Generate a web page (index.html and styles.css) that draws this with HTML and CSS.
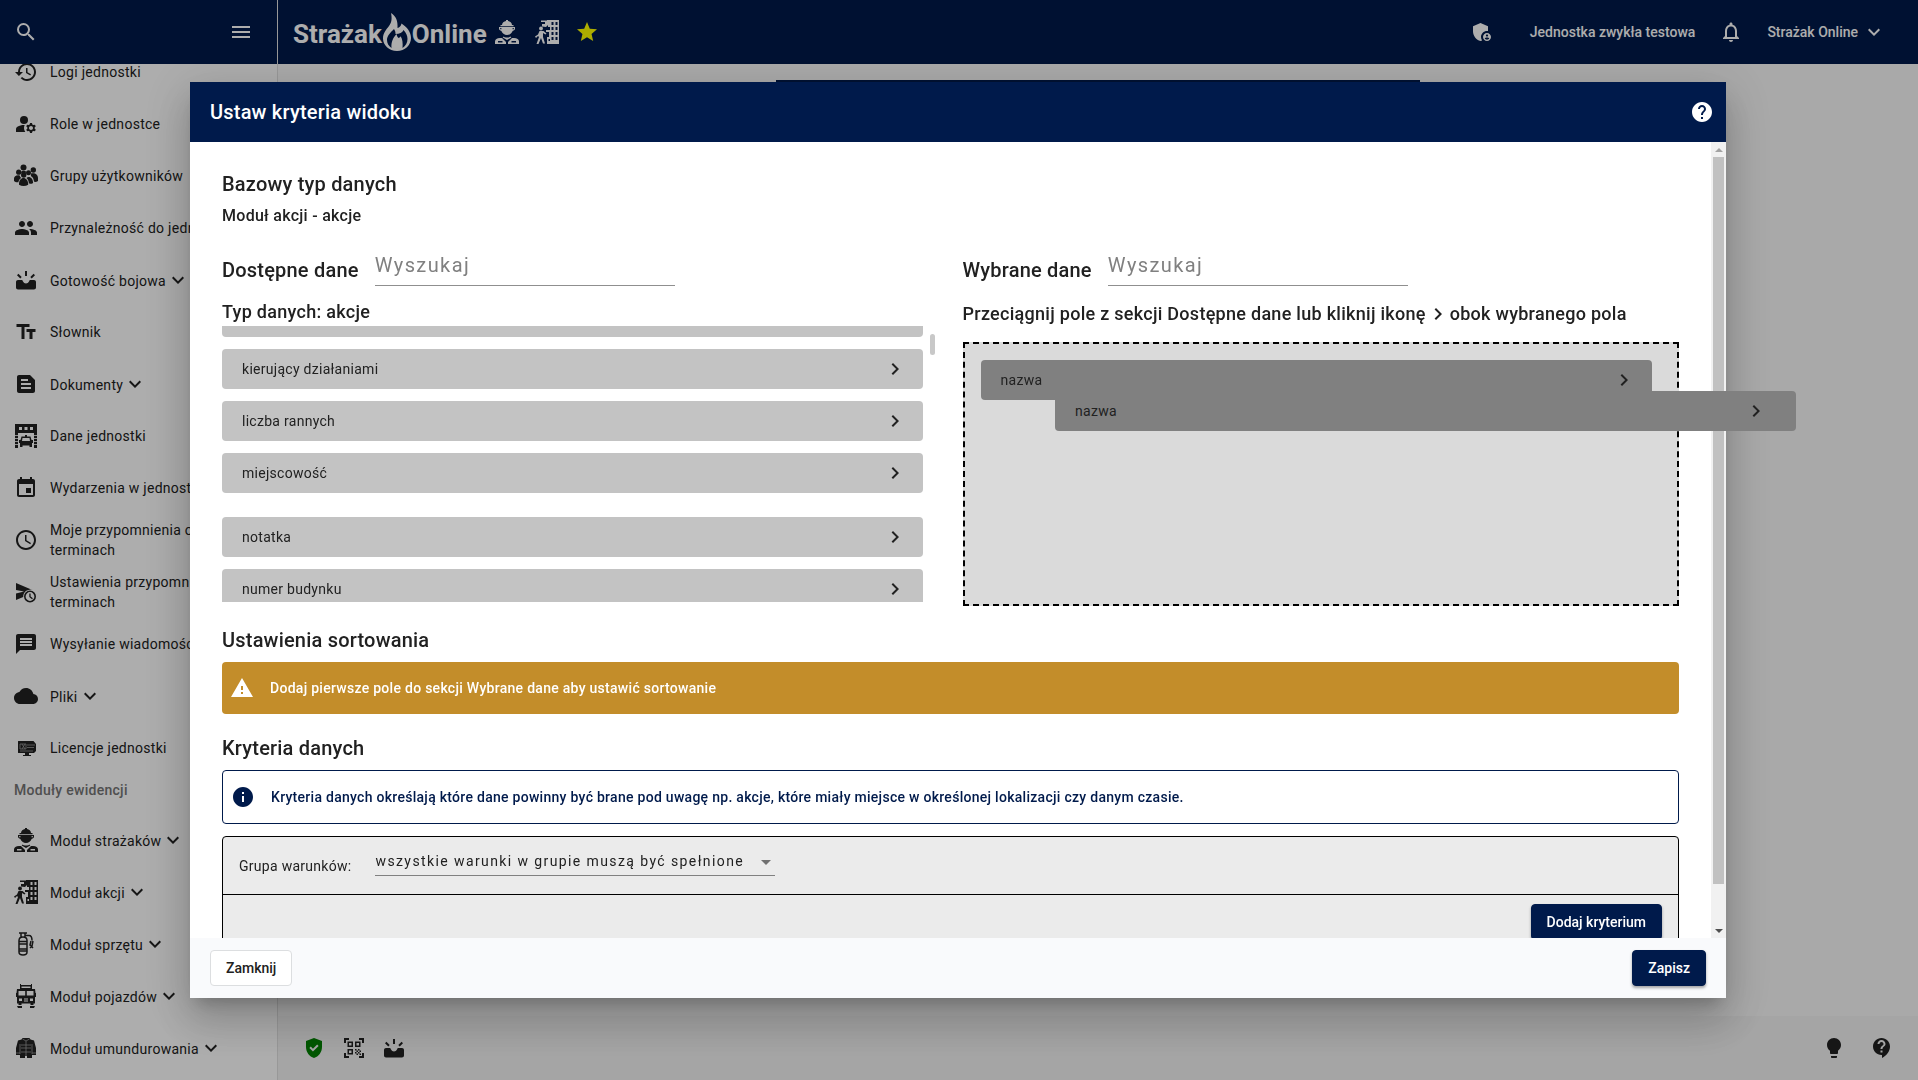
FILE: index.html
```html
<!DOCTYPE html>
<html lang="pl">
<head>
    <meta charset="utf-8">
    <title>Strażak Online</title>
    <link rel="stylesheet" href="styles.css">
</head>
<body>
    <svg class="sprite" aria-hidden="true">
        <symbol id="search" viewBox="0 0 24 24"><path d="M15.5 14h-.79l-.28-.27A6.471 6.471 0 0 0 16 9.5 6.5 6.5 0 1 0 9.5 16c1.61 0 3.09-.59 4.23-1.57l.27.28v.79l5 4.99L20.49 19l-4.99-5zm-6 0C7.01 14 5 11.99 5 9.5S7.01 5 9.5 5 14 7.01 14 9.5 11.99 14 9.5 14z"/></symbol>
        <symbol id="menu" viewBox="0 0 24 24"><path d="M3 18h18v-2H3v2zm0-5h18v-2H3v2zm0-7v2h18V6H3z"/></symbol>
        <symbol id="history" viewBox="0 0 24 24"><path d="M13 3c-4.97 0-9 4.03-9 9H1l3.89 3.89.07.14L9 12H6c0-3.87 3.13-7 7-7s7 3.13 7 7-3.13 7-7 7c-1.93 0-3.68-.79-4.94-2.06l-1.42 1.42C8.27 19.99 10.51 21 13 21c4.97 0 9-4.03 9-9s-4.03-9-9-9zm-1 5v5l4.28 2.54.72-1.21-3.5-2.08V8H12z"/></symbol>
        <symbol id="role" viewBox="0 0 24 24"><circle cx="10" cy="8" r="4"/><path d="M10.67 13.02C10.45 13.01 10.23 13 10 13c-2.42 0-4.68.67-6.61 1.82-.88.52-1.39 1.5-1.39 2.53V20h9.26A6.963 6.963 0 0 1 10 16c0-1.07.25-2.08.67-2.98zM20.75 16c0-.22-.03-.42-.06-.63l1.14-1.01-1-1.73-1.45.49c-.32-.27-.68-.48-1.08-.63L18 11h-2l-.3 1.49c-.4.15-.76.36-1.08.63l-1.45-.49-1 1.73 1.14 1.01c-.03.21-.06.41-.06.63s.03.42.06.63l-1.14 1.01 1 1.73 1.45-.49c.32.27.68.48 1.08.63L16 21h2l.3-1.49c.4-.15.76-.36 1.08-.63l1.45.49 1-1.73-1.14-1.01c.03-.21.06-.41.06-.63zM17 18c-1.1 0-2-.9-2-2s.9-2 2-2 2 .9 2 2-.9 2-2 2z"/></symbol>
        <symbol id="crowd" viewBox="0 0 24 24"><circle cx="9.5" cy="3.6" r="3"/><circle cx="19.3" cy="6" r="2.7"/><circle cx="4.7" cy="8.2" r="2.6"/><circle cx="14.5" cy="8.8" r="2.5"/><circle cx="9.7" cy="11" r="2.7"/><path d="M6.8 8c1.5-1.6 4.2-1.6 5.4-.2-.5.7-.5 1.300-.4 1.800-1.400-.8-3-.6-4.200.1 0-.6-.3-1.200-.8-1.700zM16.800 9.600c3.500-1.300 7.200.4 7.200 4.400v3c-1.300.9-2.500 1-4 .8-.2-2.900-1-4.700-3.200-5.900.4-.7.4-1.500 0-2.300zM0 17v-2.500c0-2.500 2.700-3.900 5.700-3.100.3 1.200.8 2 1.500 2.600-1.500.8-2.600 2.300-2.800 4.300C2.600 18.500 1 18.200 0 17zM12.400 13.900c2.800-2.100 6.600.1 6.700 5-1.200.8-2.800 1-4.200.7-.1-2.600-1-4.600-2.500-5.700zM5 20.700c-.4-9 9.400-8.600 9.200 0-2.700 1.700-6.500 1.700-9.200 0z"/></symbol>
        <symbol id="group" viewBox="0 0 24 24"><path d="M16 11c1.66 0 2.99-1.34 2.99-3S17.66 5 16 5c-1.66 0-3 1.34-3 3s1.34 3 3 3zm-8 0c1.66 0 2.99-1.34 2.99-3S9.66 5 8 5C6.34 5 5 6.34 5 8s1.34 3 3 3zm0 2c-2.33 0-7 1.17-7 3.500V19h14v-2.500c0-2.330-4.670-3.500-7-3.500zm8 0c-.29 0-.62.02-.97.05 1.16.84 1.970 1.970 1.970 3.450V19h6v-2.500c0-2.330-4.670-3.500-7-3.500z"/></symbol>
        <symbol id="ready" viewBox="0 0 24 24"><path d="M4 12h3.500c.8 0 1 .4 1.500 1.500.7 1.300 1.600 2 3 2s2.300-.7 3-2c.5-1.100.7-1.500 1.500-1.500H20c1.100 0 2 .9 2 2v5.500c0 1.100-.9 2-2 2H4c-1.100 0-2-.9-2-2V14c0-1.100.9-2 2-2zM11 3h2v5h-2zM3 7.200l1.400-1.400 3.300 3.300-1.400 1.400zM21 7.200l-1.400-1.400-3.300 3.300 1.400 1.400z"/></symbol>
        <symbol id="letters" viewBox="0 0 24 24"><path d="M2.500 4v3h5v12h3V7h5V4h-13zm19 5h-9v3h3v7h3v-7h3V9z"/></symbol>
        <symbol id="doc" viewBox="0 0 24 24"><path d="M16 3H5c-1.100 0-2 .9-2 2v14c0 1.100.9 2 2 2h14c1.100 0 2-.9 2-2V8l-5-5zM7 7h7v2H7V7zm10 10H7v-2h10v2zm0-4H7v-2h10v2z"/></symbol>
        <symbol id="station" viewBox="0 0 24 24"><path fill-rule="evenodd" d="M1 0h22v24h-3V9H4v15H1zM5 3v3h3V3zm5.500 0v3h3V3zM16 3v3h3V3z"/><path d="M1 11.500h3M1 14.500h3M1 17.500h3M1 20.500h3M20 11.500h3M20 14.500h3M20 17.500h3M20 20.500h3" stroke="#fff" stroke-width=".8"/><path fill-rule="evenodd" d="M11 11h2v1.500h3.500l1 3.500H19v3h-1v4h-2.500v-1.500h-7V23H6v-4H5v-3h1.500l1-3.500H11zM8.500 14L8 17h8l-.5-3z"/></symbol>
        <symbol id="event" viewBox="0 0 24 24"><path d="M17 12h-5v5h5v-5zM16 1v2H8V1H6v2H5c-1.110 0-1.990.9-1.990 2L3 19c0 1.100.89 2 2 2h14c1.100 0 2-.9 2-2V5c0-1.100-.9-2-2-2h-1V1h-2zm3 18H5V8h14v11z"/></symbol>
        <symbol id="clock" viewBox="0 0 24 24"><path d="M11.990 2C6.470 2 2 6.480 2 12s4.470 10 9.990 10C17.520 22 22 17.520 22 12S17.520 2 11.990 2zM12 20c-4.420 0-8-3.580-8-8s3.580-8 8-8 8 3.580 8 8-3.580 8-8 8zm.5-13H11v6l5.250 3.150.75-1.230-4.500-2.670z"/></symbol>
        <symbol id="send-later" viewBox="0 0 24 24"><path d="M2 3l17 7.200A7 7 0 0 0 9.200 17L2 20v-6.500l8-2-8-1.500z"/><circle cx="16" cy="16.500" r="5.200" fill="none" stroke="currentColor" stroke-width="1.600"/><path d="M15.300 13.500h1.300v2.900l2.300 1.900-.9.900-2.700-2.300z"/></symbol>
        <symbol id="message" viewBox="0 0 24 24"><path d="M20 2H4c-1.100 0-1.990.9-1.990 2L2 22l4-4h14c1.100 0 2-.9 2-2V4c0-1.100-.9-2-2-2zM6 9h12v2H6V9zm12 5H6v-2h12v2zm0-6H6V6h12v2z"/></symbol>
        <symbol id="cloud" viewBox="0 0 24 24"><path d="M19.350 10.040C18.670 6.590 15.640 4 12 4 9.110 4 6.600 5.640 5.350 8.040 2.340 8.360 0 10.910 0 14c0 3.310 2.690 6 6 6h13c2.760 0 5-2.240 5-5 0-2.640-2.050-4.780-4.650-4.960z"/></symbol>
        <symbol id="license" viewBox="0 0 24 24"><path d="M4.500 5h15l2.500 3v7l-2 2h-5v2h2v1H9v-1h2v-2H4.500C4 17 4 16.500 4 16V6c0-.5 0-1 .5-1z"/><path d="M6 8h6v5H6zM13 9h8M13 11.500h7M6 15h13M8 8l3 5M11 8l-3 5" fill="none" stroke="#999" stroke-width=".8"/></symbol>
        <symbol id="fireman" viewBox="0 0 24 24"><path fill-rule="evenodd" d="M7 5C7 2.800 9 1.200 11 1V0h2v1c2 .200 4 1.800 4 4h1.500v1.200h-13V5zM4 7h16v1.500c0 1.300-.9 2.200-2.400 2.400C17 13 14.500 15 12 15s-5-2-5.600-4.100C4.900 10.700 4 9.800 4 8.500zM8.500 16.500c1 1.300 6 1.300 7 0l.8 1-4.300 2.500-4.300-2.500zM0 24v-2.500c0-2 2-3.500 5-3.500h2l4 4v2zM24 24v-2.500c0-2-2-3.500-5-3.500h-2l-4 4v2zM3 21v1.500h4.500V21zM16.500 21v1.500H21V21zM5.200 8v1.200h1.200V8zM17.600 8v1.200h1.200V8z"/></symbol>
        <symbol id="rescue" viewBox="0 0 24 24"><path fill-rule="evenodd" d="M12 0h12v24H12v-7h2v-5h-3v-2h4V7h-2V5l-2 2-4-.500V4h3V2H6V.500h6zm4.500 2v3h2V2zm4 0v3h2V2zm-4 5v3h2V7zm4 0v3h2V7zm-4 5v3h2v-3zm4 0v3h2v-3zm-4 5v3h2v-3zm4 0v3h2v-3zM13.500 19v2h1.500v-2z"/><circle cx="6" cy="8.500" r="1.900"/><path d="M4.500 11h4l3 2.500-1 1-2.500-1.500v4l2 6.500H8L6 18l-2.500 6h-2L4 17l-1-1-2 2-1-1.500 3-2z"/></symbol>
        <symbol id="cylinder" viewBox="0 0 24 24"><path d="M5 1h8M7 1v4M11 1v4M5 8.500C5 6 7 5 9 5s4 1 4 3.500V20c0 2-2 3-4 3s-4-1-4-3zM5 9.500h8M5 12h8M5 17h8M5 19h8M11 3.500h4c2.500 0 3 2 3 5M17 9l-1 4 3 3M19 9l-1 5-2 2" fill="none" stroke="currentColor" stroke-width="1.500"/></symbol>
        <symbol id="truck" viewBox="0 0 24 24"><path fill-rule="evenodd" d="M6 0h1v1h10V0h1v5h3l.5 4H22v4h-1v6.500h-1.500V21h-3v-1.500h-9V21h-3v-1.500H3V13H2V9h.500L3 5h3zM7.500 2.500V4h9V2.500zM4.500 7v4.500h6.700V7zm8.300 0v4.500h6.700V7zM5 14.500V17h3v-2.500zm11 0V17h3v-2.500zm-6 0v1h4v-1zm0 2v1h4v-1z"/><path d="M3 22h5v2H4zM16 22h5l-1 2h-4z"/></symbol>
        <symbol id="uniform" viewBox="0 0 24 24"><path d="M8.500 2h7l1 1.500 3.500 1L22 12v7h-4v3h-5v-2h-2v2H6v-3H2v-7l2-7.500 3.500-1z"/><path d="M12 5v15M6 8v10M18 8v10M7 9h10M7 12h10M2 17h4M18 17h4M7 16h10M8.500 3l3.500 2 3.500-2" fill="none" stroke="#999" stroke-width=".800"/></symbol>
        <symbol id="down" viewBox="0 0 24 24"><path d="M7.410 8.590L12 13.170l4.590-4.580L18 10l-6 6-6-6z"/></symbol>
        <symbol id="right" viewBox="0 0 24 24"><path d="M10 6L8.590 7.410 13.170 12l-4.580 4.590L10 18l6-6z"/></symbol>
        <symbol id="star" viewBox="0 0 24 24"><path d="M12 17.270L18.180 21l-1.640-7.030L22 9.240l-7.190-.61L12 2 9.190 8.630 2 9.240l5.460 4.730L5.820 21z"/></symbol>
        <symbol id="admin" viewBox="0 0 24 24"><path d="M17 11c.34 0 .67.04 1 .09V6.270L10.500 3 3 6.270v4.910c0 4.540 3.200 8.790 7.500 9.820.55-.13 1.080-.32 1.600-.55-.69-.98-1.100-2.170-1.100-3.450 0-3.310 2.690-6 6-6z"/><path d="M17 13c-2.210 0-4 1.790-4 4s1.790 4 4 4 4-1.790 4-4-1.790-4-4-4zm0 1.380c.62 0 1.120.51 1.120 1.120s-.51 1.120-1.120 1.120-1.120-.51-1.120-1.120.5-1.120 1.120-1.120zm0 5.370c-.93 0-1.740-.46-2.240-1.170.05-.72 1.510-1.080 2.240-1.080s2.190.36 2.240 1.080c-.5.71-1.310 1.170-2.240 1.170z"/></symbol>
        <symbol id="bell" viewBox="0 0 24 24"><path d="M12 22c1.100 0 2-.9 2-2h-4c0 1.100.9 2 2 2zm6-6v-5c0-3.070-1.630-5.640-4.500-6.320V4c0-.83-.67-1.500-1.500-1.500s-1.500.67-1.500 1.500v.68C7.640 5.360 6 7.920 6 11v5l-2 2v1h16v-1l-2-2zm-2 1H8v-6c0-2.480 1.510-4.500 4-4.500s4 2.020 4 4.500v6z"/></symbol>
        <symbol id="help" viewBox="0 0 24 24"><path d="M12 2C6.480 2 2 6.480 2 12s4.480 10 10 10 10-4.480 10-10S17.520 2 12 2zm1 17h-2v-2h2v2zm2.070-7.750l-.9.920C13.450 12.900 13 13.500 13 15h-2v-.5c0-1.100.45-2.100 1.170-2.830l1.240-1.260c.37-.36.59-.86.59-1.410 0-1.100-.9-2-2-2s-2 .9-2 2H8c0-2.210 1.790-4 4-4s4 1.790 4 4c0 .88-.36 1.680-.93 2.250z"/></symbol>
        <symbol id="warning" viewBox="0 0 24 24"><path d="M1 21h22L12 2 1 21zm12-3h-2v-2h2v2zm0-4h-2v-4h2v4z"/></symbol>
        <symbol id="info" viewBox="0 0 24 24"><path d="M12 2C6.480 2 2 6.480 2 12s4.480 10 10 10 10-4.480 10-10S17.520 2 12 2zm1 15h-2v-6h2v6zm0-8h-2V7h2v2z"/></symbol>
        <symbol id="shield" viewBox="0 0 24 24"><path d="M12 2L4 5v6.090c0 5.050 3.410 9.760 8 10.910 4.590-1.150 8-5.860 8-10.910V5l-8-3zm-1.060 13.540L7.400 12l1.410-1.410 2.120 2.120 4.240-4.240 1.410 1.410-5.640 5.660z"/></symbol>
        <symbol id="qr" viewBox="0 0 24 24"><path d="M3 7V3h4M17 3h4v4M21 17v4h-4M7 21H3v-4" fill="none" stroke="currentColor" stroke-width="2"/><path d="M6.250 6.250h4v4h-4zM13.750 6.250h4v4h-4zM6.250 13.750h4v4h-4z" fill="none" stroke="currentColor" stroke-width="1.500"/><path d="M13 13h1.500v1.500H13zM14.500 14.500H16V16h-1.500zM16 13h1.500v1.500H16zM17.500 14.500H19V16h-1.500zM13 16h1.500v1.500H13zM16 16h1.500v1.500H16zM14.500 17.500H16V19h-1.500zM17.500 17.500H19V19h-1.500z"/></symbol>
        <symbol id="bulb" viewBox="0 0 24 24"><path d="M9 21c0 .5.4 1 1 1h4c.6 0 1-.5 1-1v-1H9v1zm3-19C8.100 2 5 5.100 5 9c0 2.400 1.200 4.500 3 5.700V17c0 .5.4 1 1 1h6c.6 0 1-.5 1-1v-2.300c1.800-1.300 3-3.400 3-5.700 0-3.900-3.100-7-7-7z"/></symbol>
        <symbol id="support" viewBox="0 0 24 24"><path d="M11.500 2C6.810 2 3 5.810 3 10.500S6.810 19 11.500 19h.5v3c4.860-2.340 8-7 8-11.500C20 5.810 16.190 2 11.500 2zm1 14.500h-2v-2h2v2zm0-3.500h-2c0-3.250 3-3 3-5 0-1.100-.9-2-2-2s-2 .9-2 2h-2c0-2.210 1.790-4 4-4s4 1.790 4 4c0 2.500-3 2.750-3 5z"/></symbol>
    </svg>

    <header class="topbar">
        <div class="topbar-side">
            <button class="icon-btn" aria-label="Szukaj"><svg class="icon"><use href="#search"/></svg></button>
            <button class="icon-btn" aria-label="Menu"><svg class="icon"><use href="#menu"/></svg></button>
        </div>
        <div class="topbar-main">
            <a class="logo" href="#">
                <span>Strażak</span>
                <svg class="flame" viewBox="0 0 28 38"><path fill-rule="evenodd" d="M8 0c5 3 7 8 6.500 15 2-.5 3.500-2 4-4.500C24 14 28 19 28 25c0 7-6 13-14 13S0 32 0 25.500C0 20 3 17 6 13c3-4 3-8 2-13zM11 16c-4 4-7 7-7 11 0 3 1.500 6 4.500 8-.5-6 1.500-10 5-14 .5 2 1 3 2 4 1.500-.5 2-1 2-2 2 3 2.500 7 2 12 3-2 5-5 5-9 0-3.500-1.500-6.500-4-9-1 2.500-4 4-8 4 0-2-.5-3.500-1.500-5z"/></svg>
                <span>Online</span>
            </a>
            <nav class="shortcuts">
                <a href="#" aria-label="Moduł strażaków"><svg class="icon"><use href="#fireman"/></svg></a>
                <a href="#" aria-label="Moduł akcji"><svg class="icon"><use href="#rescue"/></svg></a>
                <a class="favourite" href="#" aria-label="Ulubione"><svg class="icon"><use href="#star"/></svg></a>
            </nav>
            <div class="account">
                <button class="icon-btn" aria-label="Uprawnienia"><svg class="icon"><use href="#admin"/></svg></button>
                <button class="unit">Jednostka zwykła testowa</button>
                <button class="icon-btn" aria-label="Powiadomienia"><svg class="icon"><use href="#bell"/></svg></button>
                <button class="user">Strażak Online <svg class="icon"><use href="#down"/></svg></button>
            </div>
        </div>
    </header>

    <div class="layout">
        <nav class="sidebar">
            <ul class="nav-list">
                <li><a href="#"><svg class="icon"><use href="#history"/></svg>Logi jednostki</a></li>
                <li><a href="#"><svg class="icon"><use href="#role"/></svg>Role w jednostce</a></li>
                <li><a href="#"><svg class="icon"><use href="#crowd"/></svg>Grupy użytkowników</a></li>
                <li><a href="#"><svg class="icon"><use href="#group"/></svg>Przynależność do jednostki</a></li>
                <li><a href="#"><svg class="icon"><use href="#ready"/></svg><span>Gotowość bojowa<svg class="icon more"><use href="#down"/></svg></span></a></li>
                <li><a href="#"><svg class="icon"><use href="#letters"/></svg>Słownik</a></li>
                <li><a href="#"><svg class="icon"><use href="#doc"/></svg><span>Dokumenty<svg class="icon more"><use href="#down"/></svg></span></a></li>
                <li><a href="#"><svg class="icon"><use href="#station"/></svg>Dane jednostki</a></li>
                <li><a href="#"><svg class="icon"><use href="#event"/></svg>Wydarzenia w jednostce</a></li>
                <li><a href="#"><svg class="icon"><use href="#clock"/></svg><span>Moje przypomnienia o<br>terminach</span></a></li>
                <li><a href="#"><svg class="icon"><use href="#send-later"/></svg><span>Ustawienia przypomnień o<br>terminach</span></a></li>
                <li><a href="#"><svg class="icon"><use href="#message"/></svg>Wysyłanie wiadomości</a></li>
                <li><a href="#"><svg class="icon"><use href="#cloud"/></svg><span>Pliki<svg class="icon more"><use href="#down"/></svg></span></a></li>
                <li><a href="#"><svg class="icon"><use href="#license"/></svg>Licencje jednostki</a></li>
            </ul>
            <h2 class="nav-heading">Moduły ewidencji</h2>
            <ul class="nav-list">
                <li><a href="#"><svg class="icon"><use href="#fireman"/></svg><span>Moduł strażaków<svg class="icon more"><use href="#down"/></svg></span></a></li>
                <li><a href="#"><svg class="icon"><use href="#rescue"/></svg><span>Moduł akcji<svg class="icon more"><use href="#down"/></svg></span></a></li>
                <li><a href="#"><svg class="icon"><use href="#cylinder"/></svg><span>Moduł sprzętu<svg class="icon more"><use href="#down"/></svg></span></a></li>
                <li><a href="#"><svg class="icon"><use href="#truck"/></svg><span>Moduł pojazdów<svg class="icon more"><use href="#down"/></svg></span></a></li>
                <li><a href="#"><svg class="icon"><use href="#uniform"/></svg><span>Moduł umundurowania<svg class="icon more"><use href="#down"/></svg></span></a></li>
            </ul>
        </nav>
        <div class="page">
            <main class="page-body"><div class="page-card"></div></main>
            <footer class="page-footer">
                <a class="secure" href="#" aria-label="Bezpieczeństwo"><svg class="icon"><use href="#shield"/></svg></a>
                <a href="#" aria-label="Kod QR"><svg class="icon"><use href="#qr"/></svg></a>
                <a href="#" aria-label="Gotowość bojowa"><svg class="icon"><use href="#ready"/></svg></a>
                <a class="push" href="#" aria-label="Wskazówki"><svg class="icon"><use href="#bulb"/></svg></a>
                <a class="support" href="#" aria-label="Pomoc"><svg class="icon"><use href="#support"/></svg></a>
            </footer>
        </div>
    </div>

    <div class="backdrop">
        <section class="dialog" role="dialog" aria-labelledby="dialog-title">
            <header class="dialog-header">
                <h1 id="dialog-title">Ustaw kryteria widoku</h1>
                <button class="icon-btn" aria-label="Pomoc"><svg class="icon"><use href="#help"/></svg></button>
            </header>
            <div class="dialog-body">
                <div class="dialog-content">
                    <h2>Bazowy typ danych</h2>
                    <p class="base-type">Moduł akcji - akcje</p>

                    <div class="columns">
                        <div class="available">
                            <div class="search-row">
                                <label for="search-available">Dostępne dane</label>
                                <input type="text" id="search-available" placeholder="Wyszukaj">
                            </div>
                            <h3>Typ danych: akcje</h3>
                            <div class="list-wrap">
                                <ul class="field-list">
                                    <li class="field"></li>
                                    <li class="field">kierujący działaniami <button class="icon-btn" aria-label="Dodaj"><svg class="icon"><use href="#right"/></svg></button></li>
                                    <li class="field">liczba rannych <button class="icon-btn" aria-label="Dodaj"><svg class="icon"><use href="#right"/></svg></button></li>
                                    <li class="field">miejscowość <button class="icon-btn" aria-label="Dodaj"><svg class="icon"><use href="#right"/></svg></button></li>
                                    <li class="field after-gap">notatka <button class="icon-btn" aria-label="Dodaj"><svg class="icon"><use href="#right"/></svg></button></li>
                                    <li class="field">numer budynku <button class="icon-btn" aria-label="Dodaj"><svg class="icon"><use href="#right"/></svg></button></li>
                                </ul>
                                <div class="list-thumb"></div>
                            </div>
                        </div>
                        <div class="selected">
                            <div class="search-row">
                                <label for="search-selected">Wybrane dane</label>
                                <input type="text" id="search-selected" placeholder="Wyszukaj">
                            </div>
                            <h3>Przeciągnij pole z sekcji Dostępne dane lub kliknij ikonę <svg class="icon"><use href="#right"/></svg> obok wybranego pola</h3>
                            <div class="drop-zone">
                                <div class="field dragged">nazwa <button class="icon-btn" aria-label="Dodaj"><svg class="icon"><use href="#right"/></svg></button></div>
                            </div>
                        </div>
                    </div>

                    <h2 class="section-title">Ustawienia sortowania</h2>
                    <div class="alert warning"><svg class="icon"><use href="#warning"/></svg>Dodaj pierwsze pole do sekcji Wybrane dane aby ustawić sortowanie</div>

                    <h2 class="section-title">Kryteria danych</h2>
                    <div class="alert info"><svg class="icon"><use href="#info"/></svg>Kryteria danych określają które dane powinny być brane pod uwagę np. akcje, które miały miejsce w określonej lokalizacji czy danym czasie.</div>

                    <div class="criteria">
                        <div class="criteria-head">
                            <label for="group-rule">Grupa warunków:</label>
                            <span class="select-wrap">
                                <select id="group-rule">
                                    <option>wszystkie warunki w grupie muszą być spełnione</option>
                                </select>
                            </span>
                        </div>
                        <div class="criteria-actions"><button class="btn primary">Dodaj kryterium</button></div>
                    </div>
                </div>
                <div class="scrollbar">
                    <span class="arrow up"></span>
                    <span class="thumb"></span>
                    <span class="track"></span>
                    <span class="arrow down"></span>
                </div>
            </div>
            <footer class="dialog-footer">
                <button class="btn">Zamknij</button>
                <button class="btn primary">Zapisz</button>
            </footer>
        </section>
    </div>

    <div class="field dragged drag-preview">nazwa <button class="icon-btn" aria-label="Dodaj"><svg class="icon"><use href="#right"/></svg></button></div>
</body>
</html>
```
FILE: styles.css
```css
* {
    box-sizing: border-box;
}

body {
    margin: 0;
    height: 100vh;
    display: flex;
    flex-direction: column;
    overflow: hidden;
    font-family: Roboto, "Liberation Sans", sans-serif;
    font-size: 14px;
    line-height: 20px;
    color: #212121;
    background: #fafafa;
}

h1, h2, h3, p, ul {
    margin: 0;
    padding: 0;
}

h1, h2, h3, p {
    font-weight: 500;
}

ul {
    list-style: none;
}

a {
    color: inherit;
    text-decoration: none;
}

button, input, select {
    font: inherit;
    color: inherit;
}

.sprite {
    display: none;
}

.icon {
    width: 24px;
    height: 24px;
    flex: none;
    display: block;
    fill: currentColor;
}

.icon-btn {
    padding: 0;
    border: 0;
    background: none;
}

/* top bar */
.topbar {
    height: 64px;
    flex: none;
    display: flex;
    background: #001a4b;
    color: #fff;
}

.topbar-side {
    width: 278px;
    flex: none;
    display: flex;
    align-items: center;
    justify-content: space-between;
    padding: 0 24px 0 14px;
    border-right: 1px solid #e0e0e0;
}

.topbar-main {
    flex: 1;
    display: flex;
    align-items: center;
    padding: 0 32px 0 15px;
}

.logo {
    display: flex;
    align-items: center;
    gap: 1px;
    font-size: 26px;
    line-height: 36px;
    font-weight: bold;
}

.logo span {
    padding-top: 4px;
}

.flame {
    width: 28px;
    height: 38px;
    fill: currentColor;
}

.shortcuts {
    display: flex;
    gap: 16px;
    margin-left: 8px;
}

.favourite {
    color: yellow;
}

.account {
    display: flex;
    align-items: center;
    margin-left: auto;
}

.unit, .user {
    display: flex;
    align-items: center;
    padding: 0;
    border: 0;
    background: none;
    font-weight: 500;
}

.unit {
    margin: 0 24px 0 36px;
}

.user {
    margin-left: 24px;
    gap: 4px;
}

/* side menu */
.layout {
    flex: 1;
    min-height: 0;
    display: flex;
}

.sidebar {
    width: 278px;
    flex: none;
    overflow: hidden;
    background: #fff;
    border-right: 1px solid #e0e0e0;
}

/* menu is scrolled a little */
.nav-list:first-child {
    margin-top: -18px;
}

.nav-list a {
    height: 52px;
    display: flex;
    align-items: center;
    gap: 12px;
    padding-left: 14px;
    white-space: nowrap;
    letter-spacing: 0.02em;
}

.more {
    display: inline-block;
    vertical-align: -6px;
}

.nav-heading {
    margin-bottom: 8px;
    padding-left: 14px;
    font-size: 14px;
    line-height: 32px;
    letter-spacing: 0.02em;
    color: #757575;
}

.page {
    flex: 1;
    display: flex;
    flex-direction: column;
}

.page-body {
    flex: 1;
    padding-top: 16px;
}

.page-card {
    width: 644px;
    height: 64px;
    margin: 0 auto;
    background: #001a4b;
}

.page-footer {
    height: 64px;
    display: flex;
    align-items: center;
    gap: 16px;
    padding: 0 24px;
    background: #f3f3f3;
}

.secure {
    color: green;
}

.push {
    margin-left: auto;
}

.support {
    margin-left: 8px;
}

/* dialog */
.backdrop {
    position: fixed;
    inset: 0;
    display: flex;
    padding: 82px 192px 82px 190px;
    background: rgba(0, 0, 0, 0.32);
}

.dialog {
    flex: 1;
    min-width: 0;
    display: flex;
    flex-direction: column;
    letter-spacing: 0.02em;
    background: #fff;
    box-shadow: 0 11px 15px -7px rgba(0, 0, 0, 0.2), 0 24px 38px 3px rgba(0, 0, 0, 0.14), 0 9px 46px 8px rgba(0, 0, 0, 0.12);
}

.dialog-header {
    height: 60px;
    flex: none;
    display: flex;
    align-items: center;
    justify-content: space-between;
    padding: 0 12px 0 20px;
    background: #001a4b;
    color: #fff;
}

.dialog h1, .dialog h2 {
    font-size: 20px;
    line-height: 28px;
    letter-spacing: 0.01em;
}

.dialog-body {
    flex: 1;
    min-height: 0;
    display: flex;
}

.dialog-content {
    flex: 1;
    min-width: 0;
    overflow: hidden;
    padding: 28px 32px 0;
}

.base-type {
    margin-top: 6px;
    font-size: 16px;
    line-height: 24px;
}

.columns {
    display: grid;
    grid-template-columns: 1fr 1fr;
    gap: 24px;
    margin-top: 18px;
}

.search-row {
    display: flex;
    align-items: flex-end;
    gap: 16px;
}

.search-row label {
    font-size: 20px;
    line-height: 32px;
    font-weight: 500;
    letter-spacing: 0.01em;
}

.search-row input {
    width: 300px;
    height: 40px;
    padding: 0 0 2px;
    border: 0;
    border-bottom: 1px solid #8f8f8f;
    background: none;
    font-size: 20px;
    letter-spacing: 0.07em;
}

.search-row input::placeholder {
    color: #808080;
}

.columns h3 {
    font-size: 18px;
    line-height: 24px;
}

.available h3 {
    margin: 14px 0 2px;
}

.selected h3 {
    display: flex;
    align-items: center;
    margin: 16px 0;
    white-space: nowrap;
}

.list-wrap {
    height: 276px;
    display: flex;
    gap: 7px;
    overflow: hidden;
}

.field-list {
    flex: 1;
    margin-top: -29px;
}

.list-thumb {
    width: 5px;
    height: 21px;
    margin: 8px 4px 0 0;
    border-radius: 3px;
    background: #c8c8c8;
}

.field {
    height: 40px;
    display: flex;
    align-items: center;
    justify-content: space-between;
    margin-bottom: 12px;
    padding: 0 16px 0 20px;
    border-radius: 4px;
    background: #c3c3c3;
    letter-spacing: 0.02em;
}

.after-gap {
    margin-top: 24px;
}

.dragged {
    background: #808080;
}

.drop-zone {
    height: 264px;
    padding: 16px 25px 16px 16px;
    border: 2px dashed #000;
    background: #dadada;
}

.drag-preview {
    position: fixed;
    left: 1055px;
    top: 391px;
    width: 741px;
    margin: 0;
    padding-right: 28px;
}

.dialog .section-title {
    margin: 20px 0 8px;
}

.alert {
    display: flex;
    align-items: center;
    gap: 16px;
    border-radius: 4px;
    font-weight: 500;
}

.warning {
    padding: 14px 8px;
    background: #c38d2a;
    color: #fff;
}

.info {
    padding: 14px 8px;
    border: 1px solid #001a4b;
    color: #001a4b;
}

.criteria {
    margin-top: 12px;
    border: 1px solid #000;
    border-radius: 4px 4px 0 0;
    background: #ebebeb;
}

.criteria-head {
    display: flex;
    align-items: flex-end;
    gap: 24px;
    padding: 0 16px 18px;
    border-bottom: 1px solid #000;
}

.select-wrap {
    position: relative;
    width: 400px;
    border-bottom: 1px solid #808080;
}

/* triangle of the drop-down */
.select-wrap::after {
    content: "";
    position: absolute;
    right: 4px;
    top: 23px;
    border: 5px solid transparent;
    border-top-color: #707070;
    border-bottom: 0;
}

.select-wrap select {
    width: 100%;
    height: 38px;
    padding: 10px 0 0;
    border: 0;
    appearance: none;
    background: none;
    letter-spacing: 0.1em;
}

.criteria-actions {
    display: flex;
    justify-content: flex-end;
    padding: 9px 16px;
}

.btn {
    height: 36px;
    padding: 0 15px;
    border: 1px solid #dcdee0;
    border-radius: 4px;
    background: #fff;
    font-weight: 500;
}

.primary {
    border-color: #001a4b;
    background: #001a4b;
    color: #fff;
    box-shadow: 0 2px 3px rgba(0, 0, 0, 0.35);
}

.dialog-footer {
    height: 60px;
    flex: none;
    display: flex;
    align-items: center;
    justify-content: space-between;
    padding: 0 20px;
    background: #f9fafc;
}

.scrollbar {
    width: 15px;
    display: flex;
    flex-direction: column;
    align-items: center;
    background: #f1f1f1;
}

.thumb {
    width: 11px;
    flex: 727;
    background: #c1c1c1;
}

.track {
    flex: 39;
}

.arrow {
    margin: 6px 0 5px;
    border: 4px solid transparent;
}

.up {
    border-top: 0;
    border-bottom-color: #a3a3a3;
}

.down {
    border-bottom: 0;
    border-top-color: #505050;
}
```
